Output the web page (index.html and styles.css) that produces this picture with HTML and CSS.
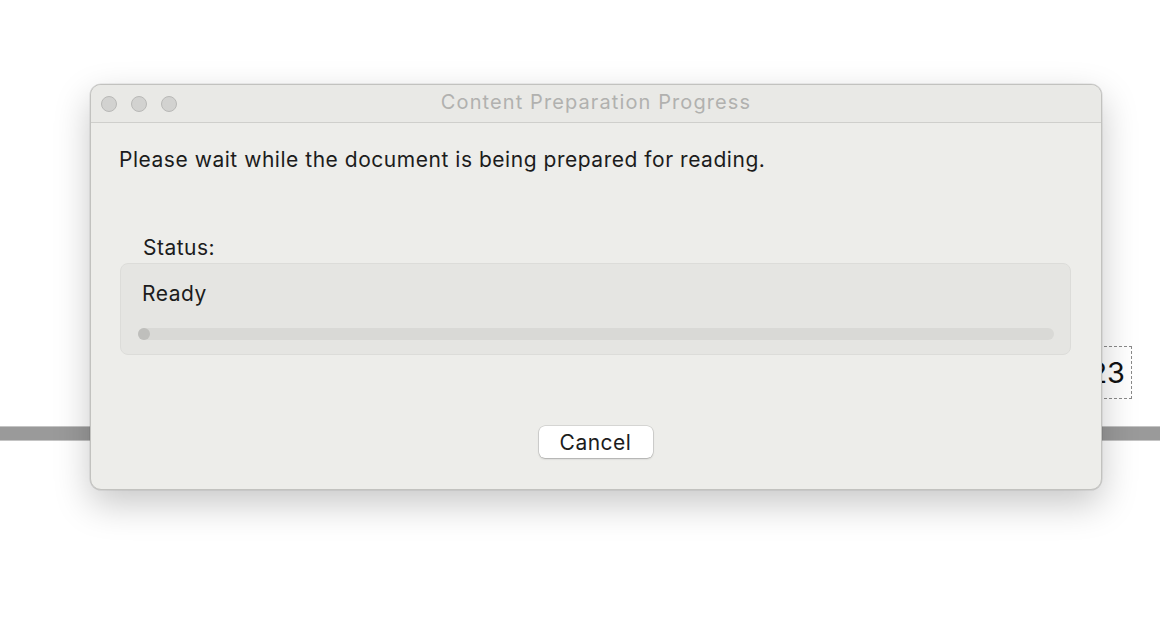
FILE: index.html
```html
<!DOCTYPE html>
<html>
<head>
<meta charset="utf-8">
<link rel="stylesheet" href="styles.css">
</head>
<body>
<div class="page">
  <div class="num-row">
    <div class="num-box">123</div>
  </div>
  <div class="rule"></div>
</div>
<div class="window">
  <div class="titlebar">
    <div class="lights">
      <span class="light"></span><span class="light"></span><span class="light"></span>
    </div>
    <div class="title">Content Preparation Progress</div>
  </div>
  <div class="content">
    <p class="intro">Please wait while the document is being prepared for reading.</p>
    <div class="status-label">Status:</div>
    <div class="group">
      <div class="state">Ready</div>
      <div class="track"><div class="knob"></div></div>
    </div>
    <div class="actions">
      <button class="btn">Cancel</button>
    </div>
  </div>
</div>
</body>
</html>
```
FILE: styles.css
```css
html, body {
  margin: 0;
  padding: 0;
  background: #ffffff;
  width: 1160px;
  height: 622px;
  overflow: hidden;
  font-family: Inter, "Noto Sans", sans-serif;
}
.page {
  padding-top: 346px;
}
.num-row {
  display: flex;
  justify-content: flex-end;
  padding-right: 28px;
}
.num-box {
  width: 70px;
  height: 51px;
  border: 1px dashed #8a8a8a;
  font-size: 29px;
  line-height: 51px;
  text-align: right;
  padding-right: 6px;
  box-sizing: content-box;
  color: #111;
}
.rule {
  margin-top: 27px;
  height: 13px;
  background: #9a9a9a;
  border-top: 1px solid #c4c4c4;
  border-bottom: 1px solid #c4c4c4;
}
.window {
  position: absolute;
  left: 90px;
  top: 84px;
  width: 1012px;
  height: 406px;
  box-sizing: border-box;
  background: #ededea;
  border: 1px solid #c2c2bf;
  border-radius: 11px;
  box-shadow: 0 14px 36px rgba(0,0,0,0.22), 0 0 0 0.5px rgba(0,0,0,0.12);
  overflow: hidden;
}
.titlebar {
  height: 37px;
  border-bottom: 1px solid #cfcfcc;
  background: #e9e9e6;
  display: flex;
  align-items: center;
  position: relative;
}
.lights {
  display: flex;
  gap: 14px;
  padding-left: 10px;
}
.light {
  width: 16px;
  height: 16px;
  border-radius: 50%;
  background: #d2d2d0;
  border: 1px solid #b9b9b7;
  box-sizing: border-box;
}
.title {
  position: absolute;
  left: 0;
  right: 0;
  text-align: center;
  font-size: 20px;
  letter-spacing: 1.1px;
  color: #b1b1af;
  top: 5px;
}
.content {
  padding: 0 30px 0 29px;
  display: flex;
  flex-direction: column;
}
.intro {
  margin: 24px 0 0 -1px;
  font-size: 21px;
  letter-spacing: 0.53px;
  line-height: 26px;
  color: #1c1c1c;
}
.status-label {
  margin-top: 62px;
  padding-left: 23px;
  font-size: 21px;
  letter-spacing: 0.5px;
  line-height: 26px;
  color: #1c1c1c;
}
.group {
  margin-top: 2px;
  height: 92px;
  box-sizing: border-box;
  background: #e5e5e2;
  border: 1px solid #dcdcd9;
  border-radius: 8px;
  padding: 17px 16px 0 17px;
}
.state {
  font-size: 21px;
  letter-spacing: 0.5px;
  line-height: 26px;
  color: #1c1c1c;
  padding-left: 4px;
}
.track {
  margin-top: 21px;
  height: 12px;
  border-radius: 6px;
  background: #d9d9d6;
  position: relative;
}
.knob {
  position: absolute;
  left: 0;
  top: 0;
  width: 12px;
  height: 12px;
  border-radius: 50%;
  background: #bfbfbc;
}
.actions {
  display: flex;
  justify-content: center;
  margin-top: 71px;
  padding-left: 0;
}
.btn {
  width: 114px;
  height: 32px;
  border: none;
  border-radius: 6px;
  background: #ffffff;
  box-shadow: 0 0 0 0.5px rgba(0,0,0,0.18), 0 1px 2px rgba(0,0,0,0.2);
  font-family: Inter, "Noto Sans", sans-serif;
  font-size: 21px;
  letter-spacing: 0.5px;
  color: #1c1c1c;
  padding: 0;
}
```
